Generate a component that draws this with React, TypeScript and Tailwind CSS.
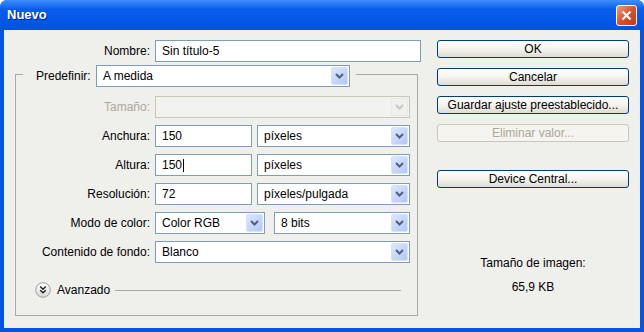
import type { ReactNode } from 'react';

const Chevron = ({ color }: { color: string }) => (
  <svg width="9" height="6" viewBox="0 0 9 6">
    <path d="M1 1 L4.5 4.5 L8 1" fill="none" stroke={color} strokeWidth="2" />
  </svg>
);

const Select = ({
  value,
  className,
  disabled,
}: {
  value?: string;
  className: string;
  disabled?: boolean;
}) => (
  <div
    className={`flex h-[22px] items-stretch border p-px ${
      disabled ? 'border-[#C9C7BA] bg-[#F2F2EE]' : 'border-[#7F9DB9] bg-white'
    } ${className}`}
  >
    <span className="flex flex-1 items-center overflow-hidden whitespace-nowrap pl-[5px]">{value}</span>
    {disabled ? (
      <span className="flex w-[17px] items-center justify-center rounded-[2px] border border-[#E8E8E4] bg-[#F0F0EC]">
        <Chevron color="#C9C7BA" />
      </span>
    ) : (
      <span className="flex w-[17px] items-center justify-center rounded-[2px] border border-[#D7E2FC] bg-linear-to-br from-[#DDE7FE] to-[#B3C7F6]">
        <Chevron color="#4D6185" />
      </span>
    )}
  </div>
);

const Input = ({ children, className }: { children: ReactNode; className: string }) => (
  <div className={`flex h-[22px] items-center border border-[#7F9DB9] bg-white pl-[6px] ${className}`}>
    {children}
  </div>
);

const Button = ({ label, disabled }: { label: string; disabled?: boolean }) =>
  disabled ? (
    <div className="flex h-[18px] items-center justify-center rounded-[3px] border border-[#C9C7BA] bg-[#F5F4EE] text-[#ACA899]">
      {label}
    </div>
  ) : (
    <div className="flex h-[18px] items-center justify-center rounded-[3px] border border-[#003C74] bg-linear-to-b from-white via-[#F4F3EE] to-[#DEDCD3]">
      {label}
    </div>
  );

const Row = ({ label, muted, children }: { label: string; muted?: boolean; children: ReactNode }) => (
  <div className="flex h-[22px] items-center">
    <span className={`w-[134px] text-right ${muted ? 'text-[#ACA899]' : ''}`}>{label}</span>
    <div className="ml-[5px] flex gap-[5px]">{children}</div>
  </div>
);

export default function App() {
  return (
    <div className="flex h-[332px] w-[644px] flex-col overflow-hidden rounded-t-[7px] bg-[#0554E4] font-['Liberation_Sans',Arial,sans-serif] text-[12px] text-black">
      {/* Title bar */}
      <div className="flex h-[30px] shrink-0 items-center justify-between bg-linear-to-b from-[#3D8FF9] from-0% via-[#0A5DEC] via-30% to-[#0052E2] pl-[7px] pr-[7px]">
        <span className="text-[13px] font-bold text-white [text-shadow:1px_1px_0_#0A1E80]">Nuevo</span>
        <div className="flex h-[21px] w-[21px] items-center justify-center rounded-[3px] border border-white bg-linear-to-br from-[#EE9A80] via-[#D9502C] to-[#C2391A]">
          <svg width="11" height="11" viewBox="0 0 11 11">
            <path d="M1.5 1.5 L9.5 9.5 M9.5 1.5 L1.5 9.5" stroke="white" strokeWidth="2.2" />
          </svg>
        </div>
      </div>

      {/* Body */}
      <div className="mx-[4px] mb-[4px] flex flex-1 bg-[#EFEFEC] pl-[11px] pt-[10px]">
        {/* Left column */}
        <div className="w-[406px]">
          <div className="flex h-[21px] items-center">
            <span className="w-[135px] text-right">Nombre:</span>
            <Input className="ml-[5px] h-[21px] w-[266px]">Sin título-5</Input>
          </div>

          <fieldset className="w-[403px] border border-[#A8A8A8] pb-[17px]">
            <legend className="ml-[7px] pt-[4px]">
              <div className="flex items-center pl-[13px] pr-[6px]">
                <span className="w-[55px]">Predefinir:</span>
                <Select value="A medida" className="ml-[5px] w-[254px]" />
              </div>
            </legend>

            <div className="mt-[9px] flex flex-col gap-[7px]">
              <Row label="Tamaño:" muted>
                <Select className="w-[255px]" disabled />
              </Row>
              <Row label="Anchura:">
                <Input className="w-[97px]">150</Input>
                <Select value="píxeles" className="w-[153px]" />
              </Row>
              <Row label="Altura:">
                <Input className="w-[97px]">
                  150<span className="ml-px h-[13px] w-px bg-black" />
                </Input>
                <Select value="píxeles" className="w-[153px]" />
              </Row>
              <Row label="Resolución:">
                <Input className="w-[97px]">72</Input>
                <Select value="píxeles/pulgada" className="w-[153px]" />
              </Row>
              <Row label="Modo de color:">
                <Select value="Color RGB" className="w-[110px]" />
                <Select value="8 bits" className="ml-[4px] w-[136px]" />
              </Row>
              <Row label="Contenido de fondo:">
                <Select value="Blanco" className="w-[255px]" />
              </Row>
            </div>

            {/* Avanzado */}
            <div className="ml-[19px] mr-[16px] mt-[19px] flex h-[16px] items-center">
              <svg width="16" height="16" viewBox="0 0 16 16">
                <defs>
                  <linearGradient id="adv" x1="0" y1="0" x2="0" y2="1">
                    <stop offset="0" stopColor="#FFFFFF" />
                    <stop offset="1" stopColor="#D8D8D4" />
                  </linearGradient>
                </defs>
                <circle cx="8" cy="8" r="7.3" fill="url(#adv)" stroke="#9C9C9C" />
                <path d="M5.2 4.6 L8 7.2 L10.8 4.6 M5.2 8.2 L8 10.8 L10.8 8.2" fill="none" stroke="#222" strokeWidth="1.4" />
              </svg>
              <span className="ml-[6px]">Avanzado</span>
              <div className="ml-[5px] h-px flex-1 bg-[#A8A8A8]" />
            </div>
          </fieldset>
        </div>

        {/* Right column */}
        <div className="ml-[16px] flex w-[192px] flex-col">
          <div className="flex flex-col gap-[10px]">
            <Button label="OK" />
            <Button label="Cancelar" />
            <Button label="Guardar ajuste preestablecido..." />
            <Button label="Eliminar valor..." disabled />
          </div>
          <div className="mt-[28px]">
            <Button label="Device Central..." />
          </div>
          <div className="mt-[68px] text-center leading-[14px]">Tamaño de imagen:</div>
          <div className="mt-[10px] text-center leading-[14px]">65,9 KB</div>
        </div>
      </div>
    </div>
  );
}
